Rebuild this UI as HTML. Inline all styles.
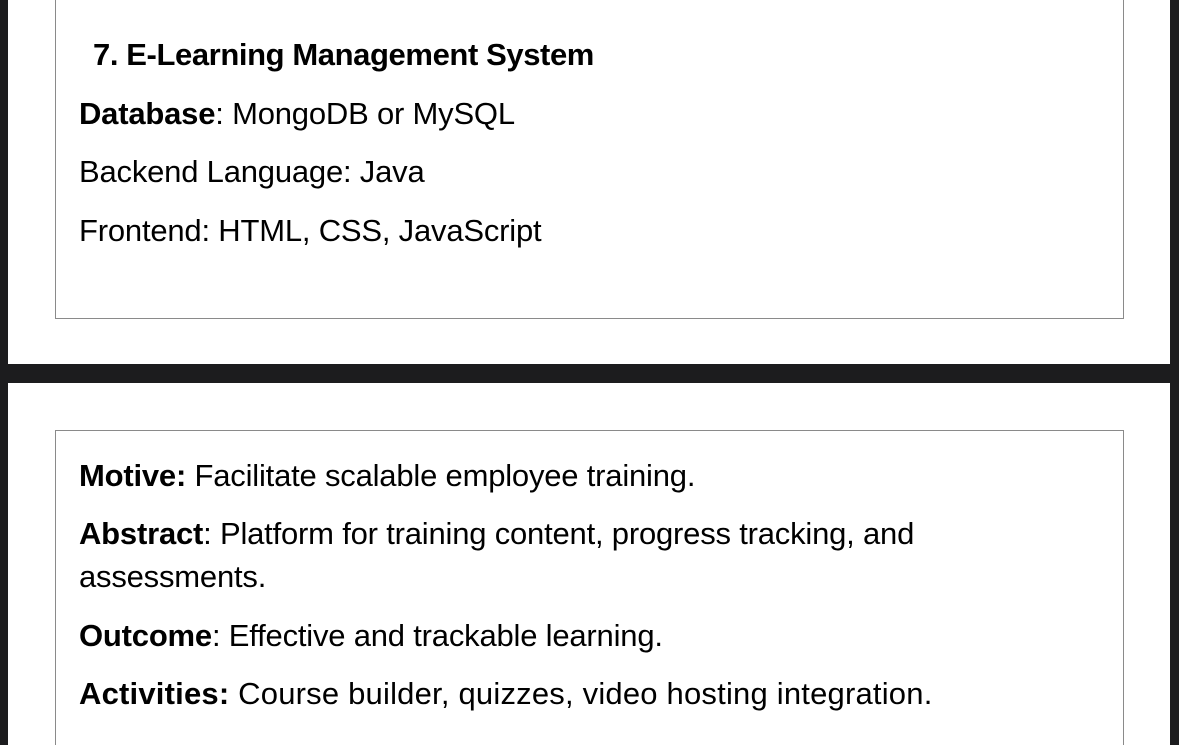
<!DOCTYPE html>
<html><head><style>
html,body{margin:0;width:1179px;height:745px;overflow:hidden}
body{background:#1c1c1e;position:relative;font-family:"Liberation Sans",sans-serif;color:#000}
.pg{position:absolute;left:8px;width:1162px;background:#fff}
.box{position:absolute;border:1.5px solid #8a8a8a;box-sizing:border-box}
.t{position:absolute;white-space:nowrap;font-size:31px;letter-spacing:-0.2px;line-height:1}
b{font-weight:bold}
</style></head><body>
<div class="pg" style="top:0;height:364px"></div>
<div class="pg" style="top:383px;height:362px"></div>
<div class="box" style="left:55px;top:-5px;width:1069px;height:324px"></div>
<div class="box" style="left:55px;top:430px;width:1069px;height:330px"></div>
<div class="t" style="left:93px;top:39px;letter-spacing:-0.4px"><b>7. E-Learning Management System</b></div>
<div class="t" style="left:79px;top:98px"><b>Database</b>: MongoDB or MySQL</div>
<div class="t" style="left:79px;top:156px">Backend Language: Java</div>
<div class="t" style="left:79px;top:215px">Frontend: HTML, CSS, JavaScript</div>
<div class="t" style="left:79px;top:460px"><b>Motive:</b> Facilitate scalable employee training.</div>
<div class="t" style="left:79px;top:518px"><b>Abstract</b>: Platform for training content, progress tracking, and</div>
<div class="t" style="left:79px;top:561px">assessments.</div>
<div class="t" style="left:79px;top:620px"><b>Outcome</b>: Effective and trackable learning.</div>
<div class="t" style="left:79px;top:678px;letter-spacing:0.2px"><b>Activities:</b> Course builder, quizzes, video hosting integration.</div>
</body></html>
